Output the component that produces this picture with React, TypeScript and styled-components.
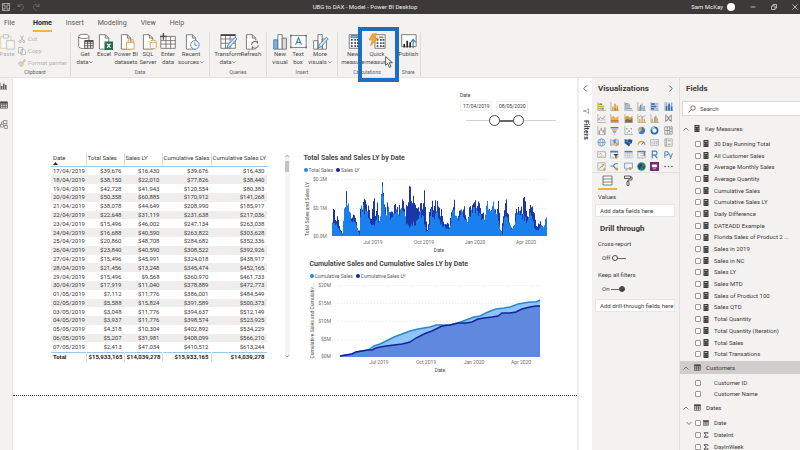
import React from "react";
import styled, { createGlobalStyle } from "styled-components";

const Global = createGlobalStyle`
  *, *::before, *::after { box-sizing: border-box; }
  body { margin: 0; background: #fff; }
  body, button, input { font-family: Roboto, "Open Sans", sans-serif; font-size: 6px; line-height: 8px; color: #3b3a39; }
  button { border: 0; padding: 0; background: none; cursor: pointer; }
  h2, h3, p, ul, fieldset { margin: 0; padding: 0; border: 0; list-style: none; }
  svg { display: block; flex: none; }
`;

const ORANGE = "#dfa03c";
const BLUE = "#4a80b8";
const GRAY = "#8c8a88";
const DARK = "#4a4846";

/* ---------- Shell ---------- */
const Shell = styled.div`
  display: flex;
  flex-direction: column;
  height: 100vh;
  overflow: hidden;
`;
const TitleBar = styled.header`
  display: grid;
  grid-template-columns: 1fr auto 1fr;
  align-items: center;
  height: 14px;
  flex: none;
  padding: 0 2px;
  background: #3b3a38;
  color: #f0efee;
`;
const TitleSide = styled.div<{ $end?: boolean }>`
  display: flex;
  align-items: center;
  justify-content: ${(p) => (p.$end ? "flex-end" : "flex-start")};
  gap: ${(p) => (p.$end ? 15 : 7)}px;
`;
const DocTitle = styled.div`
  padding-right: 70px;
`;
const User = styled.span`
  display: flex;
  align-items: center;
  gap: 4px;
  color: #f0efee;
`;
const Avatar = styled.span`
  width: 8px;
  height: 8px;
  border-radius: 50%;
  background: #fff;
`;
const Tabs = styled.nav`
  display: flex;
  align-items: stretch;
  gap: 14px;
  flex: none;
  height: 18px;
  padding-left: 4px;
  background: #f3f2f1;
`;
const Tab = styled.button<{ $active?: boolean }>`
  font-size: 7px;
  font-weight: ${(p) => (p.$active ? 700 : 400)};
  color: ${(p) => (p.$active ? "#252423" : "#5a5856")};
  border-bottom: 2px solid ${(p) => (p.$active ? "#eab93c" : "transparent")};
  padding-top: 1px;
  &:first-child { margin-right: 4px; }
`;

/* ---------- Ribbon ---------- */
const Ribbon = styled.div`
  display: flex;
  flex: none;
  height: 46px;
  background: #f3f2f1;
  border-bottom: 1px solid #e4e2e0;
`;
const Group = styled.section`
  display: flex;
  flex-direction: column;
  justify-content: space-between;
  align-items: center;
  margin-bottom: 1px;
  padding: 0 5px;
  border-right: 1px solid #dddbd9;
`;
const GroupRow = styled.div`
  display: flex;
`;
const GroupName = styled.div`
  font-size: 5px;
  line-height: 7px;
  color: #605e5c;
`;
const Command = styled.button<{ $w: number; $faded?: boolean }>`
  position: relative;
  display: flex;
  flex-direction: column;
  align-items: center;
  width: ${(p) => p.$w}px;
  padding-top: 1px;
  white-space: nowrap;
  opacity: ${(p) => (p.$faded ? 0.4 : 1)};
`;
const Line = styled.span`
  display: flex;
  align-items: center;
  gap: 1px;
  color: #4c4a48;
`;
const ClipGroup = styled(Group)`
  width: 71px;
  padding: 0;
`;
const ClipRow = styled.div`
  display: flex;
  align-self: stretch;
`;
const ClipList = styled.div`
  display: flex;
  flex-direction: column;
  gap: 4px;
  padding: 3px 0 0 4px;
`;
const ClipItem = styled.button`
  display: flex;
  align-items: center;
  gap: 2px;
  color: #b5b3b1;
  white-space: nowrap;
`;
const Highlight = styled.span`
  position: absolute;
  left: -5px;
  top: -5px;
  width: 41px;
  height: 55px;
  border: 4px solid #1b6fc1;
  z-index: 2;
`;
const Pointer = styled.span`
  position: absolute;
  left: 22px;
  top: 24px;
  z-index: 3;
`;

/* ---------- Body ---------- */
const Body = styled.div`
  display: flex;
  flex: 1;
  min-height: 0;
`;
const Rail = styled.nav`
  display: flex;
  flex-direction: column;
  align-items: flex-start;
  gap: 11px;
  width: 13px;
  flex: none;
  padding-top: 4px;
  background: #f3f2f1;
  border-right: 1px solid #e6e4e2;
`;
const Canvas = styled.main`
  flex: 1;
  min-width: 0;
  overflow: hidden;
`;
const Page = styled.div`
  display: flex;
  flex-direction: column;
  height: 318px;
  padding-top: 13px;
  border-bottom: 1px dotted #333;
`;
const Slicer = styled.fieldset`
  display: flex;
  flex-direction: column;
  align-self: flex-end;
  width: 97px;
  margin-right: 20px;
  font-size: 5px;
`;
const SlicerDates = styled.div`
  display: flex;
  gap: 4px;
  margin-top: 2px;
`;
const DateInput = styled.input`
  width: 32px;
  height: 10px;
  padding: 0 0 0 2px;
  border: 1px solid #f1f0ef;
  outline: 0;
  font-size: 5px;
`;
const Range = styled.div`
  display: grid;
  width: 90px;
  height: 13px;
  margin: 3px 0 0 6px;
  align-items: center;
  background:
    linear-gradient(#666, #666) 28px 6px / 24px 2px no-repeat,
    linear-gradient(#d4d2d0, #d4d2d0) 0 6px / 100% 1px no-repeat;
`;
const Thumb = styled.input`
  grid-area: 1 / 1;
  appearance: none;
  width: 100%;
  height: 11px;
  margin: 0;
  background: none;
  pointer-events: none;
  &::-webkit-slider-thumb {
    appearance: none;
    width: 11px;
    height: 11px;
    border: 1px solid #444;
    border-radius: 50%;
    background: #fff;
    pointer-events: auto;
  }
`;
const Visuals = styled.div`
  display: flex;
  align-items: flex-start;
  margin-top: 26px;
  padding-left: 38px;
`;
const SalesTable = styled.table`
  width: 216px;
  height: 209px;
  border-collapse: collapse;
  table-layout: fixed;
  tr > * { padding: 0 2px; text-align: right; font-weight: 400; white-space: nowrap; border-right: 1px solid transparent; }
  tr > *:first-child { text-align: left; }
  thead th { height: 13px; padding: 1px 1px 0; text-align: left; vertical-align: top; border-bottom: 1px solid #9cc7e6; border-right-color: #dedcda; }
  thead th:first-child { padding-left: 2px; }
  thead th:last-child, tfoot td:last-child { border-right-color: transparent; }
  tbody tr:nth-child(even) { background: #efeeed; }
  tfoot tr > * { height: 10px; font-weight: 700; color: #252423; border-top: 1px solid #9cc7e6; border-right-color: #dedcda; }
`;
const ScrollTrack = styled.div`
  display: flex;
  flex-direction: column;
  justify-content: space-between;
  align-items: center;
  width: 5px;
  height: 204px;
  margin: 1px 13px 0 17px;
  background: #f5f4f3;
`;
const ScrollThumb = styled.span`
  width: 4px;
  height: 11px;
  margin: 3px 0 auto;
  background: #c6c4c2;
`;
const Charts = styled.div`
  display: flex;
  flex-direction: column;
  gap: 3px;
`;
const Chart = styled.figure<{ $indent?: boolean }>`
  margin: 0 0 0 ${(p) => (p.$indent ? 7 : 1)}px;
  h3 { font-size: 7px; line-height: 10px; font-weight: 700; color: #4a4846; white-space: nowrap; }
  text { font-size: 5px; fill: #6f6d6b; }
  text.axis { fill: #4c4a48; }
`;
const Legend = styled.figcaption`
  display: flex;
  gap: 3px;
  margin: 3px 0 2px;
  color: #605e5c;
  font-size: 5px;
`;
const Key = styled.span<{ $c: string }>`
  display: flex;
  align-items: center;
  gap: 1px;
  &::before { content: ""; width: 4px; height: 4px; border-radius: 50%; background: ${(p) => p.$c}; }
`;

/* ---------- Panes ---------- */
const FiltersPane = styled.aside`
  display: flex;
  flex-direction: column;
  align-items: center;
  gap: 16px;
  width: 15px;
  flex: none;
  padding-top: 7px;
  border-left: 2px solid #eeedeb;
  background: #fff;
`;
const FiltersLabel = styled.h2`
  display: flex;
  align-items: center;
  gap: 6px;
  writing-mode: vertical-rl;
  font-size: 7px;
  font-weight: 700;
`;
const VizPane = styled.aside`
  display: flex;
  flex-direction: column;
  width: 88px;
  flex: none;
  background: #f3f2f1;
  border-right: 1px solid #e1dfdd;
`;
const PaneHead = styled.div`
  display: flex;
  align-items: center;
  justify-content: space-between;
  flex: none;
  height: 21px;
  padding: 0 5px 0 6px;
`;
const PaneTitle = styled.h2`
  font-size: 8px;
  font-weight: 700;
  line-height: 10px;
  color: #3b3a39;
`;
const VizGrid = styled.div`
  display: grid;
  grid-template-columns: repeat(6, 1fr);
  grid-auto-rows: 1fr;
  height: 71px;
  padding: 0 4px 0 3px;
  margin-top: 2px;
  place-items: center;
`;
const WellTabs = styled.div`
  display: flex;
  gap: 1px;
  padding-left: 6px;
  border-top: 1px solid #e1dfdd;
`;
const WellTab = styled.button<{ $active?: boolean }>`
  display: flex;
  justify-content: center;
  align-items: center;
  width: 19px;
  height: 17px;
  border-bottom: 2px solid ${(p) => (p.$active ? "#eab93c" : "transparent")};
`;
const Wells = styled.div`
  display: flex;
  flex-direction: column;
  padding: 3px 4px 0 3px;
`;
const WellLabel = styled.p<{ $top: number }>`
  margin: ${(p) => p.$top}px 0 3px 3px;
`;
const DropWell = styled.button`
  height: 13px;
  padding-left: 4px;
  background: #fff;
  border: 1px solid #e9e7e5;
  text-align: left;
  white-space: nowrap;
`;
const DrillTitle = styled(PaneTitle)`
  margin: 7px 0 3px 5px;
`;
const Toggle = styled.label`
  display: flex;
  align-items: center;
  gap: 2px;
  height: 10px;
  margin: 2px 0 0 7px;
  & + ${DropWell} { margin-top: 5px; }
`;
const Switch = styled.input`
  appearance: none;
  display: flex;
  align-items: center;
  width: 14px;
  height: 6px;
  margin: 0;
  background: linear-gradient(#666, #666) center / 100% 1px no-repeat;
  &::before { content: ""; width: 6px; height: 6px; border: 1px solid #4a4846; border-radius: 50%; background: #f3f2f1; }
  &:checked::before { margin-left: auto; background: #4a4846; }
`;
const FieldsPane = styled.aside`
  display: flex;
  flex-direction: column;
  width: 120px;
  flex: none;
  background: #f3f2f1;
  overflow: hidden;
`;
const Search = styled.label`
  display: flex;
  align-items: center;
  gap: 4px;
  flex: none;
  height: 15px;
  margin: 2px 0 6px 2px;
  padding-left: 5px;
  background: #fff;
  border: 1px solid #dddbd9;
  border-right: 0;
  input { flex: 1; min-width: 0; border: 0; padding: 0; outline: 0; background: none; }
  input::placeholder { color: #4c4a48; opacity: 1; }
`;
const TableHead = styled.button<{ $on?: boolean }>`
  display: flex;
  align-items: center;
  gap: 5px;
  flex: none;
  height: 13px;
  padding-left: 3px;
  background: ${(p) => (p.$on ? "#d0cecd" : "transparent")};
`;
const FieldList = styled.ul<{ $h: number }>`
  display: flex;
  flex-direction: column;
  flex: none;
  height: ${(p) => p.$h}px;
  margin: 3px 0 1px;
`;
const Field = styled.li`
  display: flex;
  align-items: center;
  flex: 1;
  padding-left: 6px;
  label { display: flex; align-items: center; white-space: nowrap; }
`;
const Expander = styled.span`
  display: flex;
  width: 9px;
`;
const Check = styled.input`
  appearance: none;
  width: 6px;
  height: 6px;
  margin: 0 2px 0 0;
  border: 1px solid #9a9896;
  border-radius: 1px;
  background: #fff;
`;
const FieldIcon = styled.span`
  display: flex;
  justify-content: center;
  width: 6px;
  margin-right: 5px;
`;

/* ---------- Small glyphs ---------- */
const Chevron = ({ d, s = 6, c = "#605e5c" }: { d: "l" | "r" | "u" | "d"; s?: number; c?: string }) => (
  <svg width={s} height={s} viewBox="0 0 12 12" fill="none" stroke={c} strokeWidth="1.6">
    <path d={{ l: "M8 1 3 6l5 5", r: "M4 1l5 5-5 5", u: "M1 9l5-5 5 5", d: "M1 4l5 5 5-5" }[d]} />
  </svg>
);
const Calc = () => (
  <svg width="6" height="7" viewBox="0 0 12 14">
    <rect x="1" y="0" width="10" height="14" rx="1" fill="#3b3a39" />
    <path d="M3 3h6M3 7h1M5.500 7h1M8 7h1M3 10.500h1M5.500 10.500h1M8 10.500h1" stroke="#e5e3e1" strokeWidth="1.400" />
  </svg>
);
const TableGlyph = ({ s = 7 }: { s?: number }) => (
  <svg width={s} height={s} viewBox="0 0 14 14" fill="none" stroke="#4a4846" strokeWidth="1.200">
    <rect x="1" y="1.500" width="12" height="11" />
    <path d="M1 3h12M1 6.500h12M1 9.500h12M5 3v9.500M9 3v9.500" />
    <path d="M1 3h12" strokeWidth="3" />
  </svg>
);
const Sigma = () => (
  <svg width="6" height="6" viewBox="0 0 12 12" fill="none" stroke="#3b3a39" strokeWidth="1.800">
    <path d="M10 3.500V1.500H2l4.500 4.500L2 10.500h8v-2" />
  </svg>
);

/* ---------- Ribbon icons (20 x 20 grid) ---------- */
const page = <path d="M4 2h7l4 4v13H4zM11 2v4h4" fill="#fff" stroke="#6b6967" />;
const cyl = (x: number, y: number, c: string) => (
  <g fill="#fff" stroke={c}>
    <path d={`M${x} ${y + 2}v7c0 2 7 2 7 0v-7`} />
    <ellipse cx={x + 3.5} cy={y + 2} rx="3.500" ry="1.500" />
  </g>
);
const bigCalc = (
  <g>
    <path d="M5 2h12v16H5z" fill="#fff" stroke="#6b6967" />
    <path d="M7 8h2m2 0h2m1 0h2M7 12h2m2 0h2m1 0h2M7 15.500h2m2 0h2m1 0h2" stroke="#4a4846" strokeWidth="2" />
  </g>
);
const ribbonIcons: Record<string, React.ReactNode> = {
  paste: <g fill="#fff"><path d="M2 4h12v14H2z" stroke="#d08a2a" /><path d="M5 2h6v4H5z" stroke="#6b6967" /><path d="M9 9h9v10H9z" stroke="#6b6967" /></g>,
  get: <g><path d="M2 4v12c0 3 12 3 12 0V4" fill="#fff" stroke="#6b6967" /><ellipse cx="8" cy="4" rx="6" ry="2.500" fill="#fff" stroke="#6b6967" /><path d="M9 9h10v9H9zM9 12h10M9 15h10M12.500 9v9M16 9v9" fill="#fff" stroke="#4a4846" /><path d="M9 9.500h10" stroke="#4a4846" strokeWidth="2" /></g>,
  excel: <g>{page}<rect x="10" y="10" width="10" height="10" fill="#1d7044" /><path d="M13 12.500l4 5M17 12.500l-4 5" stroke="#fff" strokeWidth="1.400" /></g>,
  pbi: <g>{page}<path d="M10 11h9v8h-9z" fill="#fff" stroke="#e09a3c" /><path d="M12 11V8h6v3" stroke="#e09a3c" fill="none" /></g>,
  sql: <g>{page}{cyl(12, 8, "#e09a3c")}</g>,
  enter: <g><path d="M1 4h17v14H1zM1 9h17M1 13h17M7 4v14M12.500 4v14" fill="#fff" stroke="#6b6967" /><path d="M4 0v8M0 4h8" stroke="#4a4846" strokeWidth="1.500" /></g>,
  recent: <g>{page}<circle cx="14" cy="14" r="5" fill="#fff" stroke="#3d7cc0" /><path d="M14 11v3.500h3" stroke="#3d7cc0" fill="none" /></g>,
  transform: <g><path d="M1 2h17v16H1zM1 7h17M1 12h17M6.500 2v16M12 2v16" fill="#fff" stroke="#6b6967" /><path d="M1 2.500h17" stroke="#4a4846" strokeWidth="2" /><path d="M8 18l2-5 8-8 2 2-8 9z" fill="#d5e6f7" stroke="#3d7cc0" /></g>,
  refresh: <g>{page}<circle cx="14" cy="14" r="5.500" fill="#f3f2f1" /><path d="M10 14a4 4 0 0 1 7-2.500V9M18 14a4 4 0 0 1-7 2.500V19" fill="none" stroke="#6b6967" strokeWidth="1.200" /></g>,
  visual: <g><path d="M2 8h5v11H2z" fill="#7fb0e0" stroke="#3d7cc0" /><path d="M7 2h5v17H7z" fill="#fff" stroke="#6b6967" /><path d="M12 6h5v13h-5z" fill="#dcdad8" stroke="#6b6967" /></g>,
  text: <g><path d="M1 3h18v14H1z" fill="#fff" stroke="#6b6967" /><path d="M6.500 14L10 5.500l3.500 8.500M8 11h4" fill="none" stroke="#3d7cc0" strokeWidth="1.300" /><path d="M0 2h2v2H0zM18 2h2v2h-2zM0 16h2v2H0zM18 16h2v2h-2z" fill="#3d7cc0" /></g>,
  more: <g><path d="M2 9h5v10H2zM7 2h5v17H7zM12 7h5v12h-5z" fill="#fff" stroke="#6b6967" /><path d="M7 18l2-5 8-8 2 2-8 9z" fill="#d5e6f7" stroke="#3d7cc0" /></g>,
  measure: <g>{bigCalc}<path d="M7 3h8v2.500H7z" fill="#7fb0e0" stroke="#3d7cc0" /></g>,
  quick: <g><g transform="translate(2 0)">{bigCalc}<path d="M10 5h5" stroke="#8c8a88" strokeWidth="2" /></g><path d="M4 1h5L7 6h4L2 15l2-7H0z" fill="#f0a83c" stroke="#e08c28" strokeWidth="0.800" /></g>,
  publish: <g><path d="M2 2h17v14H2z" fill="#fff" stroke="#6b6967" /><path d="M5 17v-4M8.500 17V9M12 17v-6" stroke="#252423" strokeWidth="2" /><path d="M15.500 18V8M12.500 11l3-3.500 3 3.500" stroke="#3d7cc0" strokeWidth="1.400" fill="none" /></g>,
};
const RIcon = ({ n }: { n: string }) => (
  <svg width="17" height="17" viewBox="0 0 20 20" strokeWidth="1">{ribbonIcons[n]}</svg>
);

type Cmd = { icon: string; lines: string[]; w: number; menu?: boolean };
const groups: { name: string; items: Cmd[] }[] = [
  { name: "Data", items: [
    { icon: "get", lines: ["Get", "data"], w: 18, menu: true },
    { icon: "excel", lines: ["Excel"], w: 20 },
    { icon: "pbi", lines: ["Power BI", "datasets"], w: 24 },
    { icon: "sql", lines: ["SQL", "Server"], w: 20 },
    { icon: "enter", lines: ["Enter", "data"], w: 20 },
    { icon: "recent", lines: ["Recent", "sources"], w: 26, menu: true } ] },
  { name: "Queries", items: [
    { icon: "transform", lines: ["Transform", "data"], w: 26, menu: true },
    { icon: "refresh", lines: ["Refresh"], w: 20 } ] },
  { name: "Insert", items: [
    { icon: "visual", lines: ["New", "visual"], w: 16 },
    { icon: "text", lines: ["Text", "box"], w: 20 },
    { icon: "more", lines: ["More", "visuals"], w: 24, menu: true } ] },
  { name: "Calculations", items: [
    { icon: "measure", lines: ["New", "measure"], w: 20 },
    { icon: "quick", lines: ["Quick", "measure"], w: 28 } ] },
  { name: "Share", items: [{ icon: "publish", lines: ["Publish"], w: 12 }] },
];

/* ---------- Visualization icons (16 x 16 grid) ---------- */
const st = (d: string, c: string, w = 1.3) => <path d={d} fill="none" stroke={c} strokeWidth={w} />;
const axes = st("M1.500 0v15H16", GRAY, 1);
const vizIcons: [string, React.ReactNode][] = [
  ["Stacked bar", <g>{axes}{st("M2 4h7M2 8h11M2 12h8", ORANGE, 2.6)}{st("M6 4h3M9 12h3", BLUE, 2.6)}</g>],
  ["Stacked column", <g>{axes}{st("M5 15V8M9 15V3M13 15V6", ORANGE, 2.8)}{st("M9 15v-4M13 15v-3", "#c97b2a", 2.8)}</g>],
  ["Clustered bar", <g>{axes}{st("M2 3h6M2 9h9", GRAY, 1.8)}{st("M2 5.500h9M2 12h12", BLUE, 1.6)}</g>],
  ["Clustered column", <g>{axes}{st("M4 15V8M9 15V3", GRAY, 1.6)}{st("M6.500 15V5M12.500 15V7", BLUE, 1.8)}</g>],
  ["100% stacked bar", <g>{axes}{st("M2 3.500h13M2 8h13M2 12h13", "#8db4dc", 2.8)}{st("M2 3.500h6M2 8h9M2 12h5", "#2c66a8", 2.8)}</g>],
  ["100% stacked column", <g>{axes}{st("M4.500 15V1M9 15V1M13.500 15V1", "#8db4dc", 2.8)}{st("M4.500 15V7M9 15V4M13.500 15V8", "#2c66a8", 2.8)}</g>],
  ["Line", <g>{axes}{st("M2 11l4-5 4 3 5-6", GRAY)}{st("M2 7l4 5 4-2 5 1", "#a8bfd6")}</g>],
  ["Area", <g><path d="M2 6l4-3 4 4 5-4v12H2z" fill="#e5b264" />{axes}{st("M2 12h13", "#c97b2a", 3)}</g>],
  ["Stacked area", <g><path d="M2 5l4-2 5 3 4-3v12H2z" fill={ORANGE} /><path d="M2 12l4-4 4 3 5-4v8H2z" fill="#756a5e" />{axes}</g>],
  ["Line and stacked column", <g>{axes}{st("M5 15V8M9 15V5M13 15V9", ORANGE, 2.2)}{st("M2 6l5-3 4 3 4-4", BLUE, 1)}</g>],
  ["Line and clustered column", <g>{axes}{st("M4 15V8M8 15V5M13 15V7", ORANGE, 2)}{st("M10.500 15V3", BLUE, 1.6)}</g>],
  ["Ribbon", <g>{st("M3 3c6 0 4 9 10 9M3 12c6 0 4-9 10-9", GRAY, 2)}{st("M3 1v13M13 1v13", GRAY, 1.6)}</g>],
  ["Waterfall", <g>{axes}{st("M4 14V8M7.500 9V3M11 7v5M14 15V2", GRAY, 2)}</g>],
  ["Funnel", <g>{st("M1 3h14", BLUE, 2.6)}{st("M3 7h10", ORANGE, 2.4)}{st("M5 10.500h6", BLUE, 2)}{st("M7 14h2", ORANGE, 2)}</g>],
  ["Scatter", <g>{axes}<g fill={GRAY}><circle cx="5" cy="5" r="1.300" /><circle cx="9" cy="9" r="1.500" /><circle cx="13" cy="5" r="1.300" /><circle cx="6" cy="12" r="1" /><circle cx="13" cy="12" r="1" /></g></g>],
  ["Pie", <g><circle cx="8" cy="8" r="6.500" fill="#a9cbe8" /><path d="M8 8V1.500A6.500 6.500 0 1 1 3 12.500z" fill="#3b78b5" /><path d="M8 8V1.500A6.500 6.500 0 0 0 2 6z" fill={ORANGE} /></g>],
  ["Donut", <g><circle cx="8" cy="8" r="5.500" fill="none" stroke="#2c66a8" strokeWidth="3" />{st("M3 6a5.500 5.500 0 0 1 5-3.500", "#a9cbe8", 3)}</g>],
  ["Treemap", <g>{st("M1.500 1.500h13v13h-13zM6 1.500v13M10 1.500v13M1.500 8H10M10 5h4.500M10 10h4.500", GRAY, 1.4)}</g>],
  ["Map", <g><circle cx="8" cy="8" r="6.500" fill="#e3eef7" stroke={BLUE} /><ellipse cx="8" cy="8" rx="3" ry="6.500" fill="none" stroke={BLUE} />{st("M1.500 8h13", BLUE, 1)}</g>],
  ["Filled map", <g><path d="M1 3l5 1 4-2 5 2v8l-4 2-4-2-6 1z" fill="#c9d9e8" stroke={GRAY} /><path d="M6 4l4-2v7l-3 1z" fill={BLUE} /><path d="M10 9l5-1v4l-4 2z" fill={ORANGE} /></g>],
  ["Shape map", <g><path d="M1 2l5 1 3-1 6 1-1 6-3 2-2 4-4-3-4-3z" fill="#24508c" /><path d="M6 3v4l4 1 1 3M2 6l4 1" fill="none" stroke="#8db4dc" /></g>],
  ["Gauge", <g>{st("M2 12a6 6 0 0 1 9-5", ORANGE, 2.4)}{st("M11 7a6 6 0 0 1 3 5", GRAY, 2.4)}{st("M8 12l3-4", DARK, 1.4)}</g>],
  ["Card", <g>{st("M1 3h14v10H1z", GRAY, 1)}{st("M4 6v4M6.500 6h2v4h-2M10.500 6h2v4h-2", GRAY, 1)}</g>],
  ["Multi-row card", <g>{st("M1.500 1.500h13v13h-13z", GRAY, 1)}{st("M4 1v14M7 5h5M7 11h5", GRAY, 1.6)}</g>],
  ["KPI", <g>{st("M1 3h14v10H1z", GRAY, 1)}{st("M4 8l2-2 2 2", BLUE, 1.2)}{st("M4 11h8", ORANGE, 1)}</g>],
  ["Slicer", <g>{st("M1 2h13v12H1z", GRAY, 1)}{st("M1 3h13", BLUE, 3)}<path d="M6 7h9l-3.500 4v4l-2-1v-3z" fill={DARK} /></g>],
  ["Table", <g>{st("M1.500 2h13v12h-13zM1.500 6h13M1.500 10h13M6 2v12M10 2v12", "#a9b4c0", 1)}{st("M1 3h14", BLUE, 2.4)}</g>],
  ["Matrix", <g>{st("M1.500 2h13v12h-13zM6 6h8M6 10h8", GRAY, 1)}{st("M1 3h14M13 3v7", BLUE, 2.2)}</g>],
  ["R script", <g>{st("M4 15V2h5a3.500 3.500 0 0 1 0 7H4M8.500 9l4.500 6", BLUE, 2)}</g>],
  ["Python", <g>{st("M1.500 14V3h3.500a2.800 2.800 0 0 1 0 6H2M9 6l3 7M15 6l-4 10", BLUE, 1.7)}</g>],
  ["Key influencers", <g>{st("M1.500 1.500h13v13h-13z", GRAY, 1)}{st("M4 12l4-5 3 2", BLUE, 1.2)}<circle cx="11" cy="5" r="2" fill={ORANGE} /><circle cx="13" cy="13" r="2" fill={ORANGE} /></g>],
  ["Decomposition tree", <g>{st("M1 7h5M6 7l3-4h5M6 7l3 4h5", BLUE, 2)}<circle cx="12" cy="13" r="2.500" fill={ORANGE} /></g>],
  ["Q&A", <g>{st("M1 2h14v9H7l-3 4v-4H1z", BLUE, 1.2)}<circle cx="11" cy="12" r="2.500" fill={ORANGE} /></g>],
  ["ArcGIS", <g><circle cx="8" cy="8" r="7.500" fill="#2f7f86" /><path d="M3 5l4-2 3 3-3 3-2 4-3-4zM10 9l4-1-2 5z" fill="#1d4b56" /></g>],
  ["Power Apps", <g><rect width="16" height="16" fill="#742774" /><path d="M4 5h8v4H4zM5 12h6" fill="#fff" stroke="#fff" /></g>],
  ["More visuals", <g fill={DARK}><circle cx="2" cy="8" r="1.300" /><circle cx="8" cy="8" r="1.300" /><circle cx="14" cy="8" r="1.300" /></g>],
];

/* ---------- Data ---------- */
const rows = `17/04/2019 39,676 16,430 39,676 16,430
18/04/2019 38,150 22,010 77,826 38,440
19/04/2019 42,728 41,943 120,554 80,383
20/04/2019 50,358 60,885 170,912 141,268
21/04/2019 38,078 44,649 208,990 185,917
22/04/2019 22,648 31,119 231,638 217,036
23/04/2019 15,496 46,002 247,134 263,038
24/04/2019 16,688 40,590 263,822 303,628
25/04/2019 20,860 48,708 284,682 352,336
26/04/2019 23,840 40,590 308,522 392,926
27/04/2019 15,496 45,991 324,018 438,917
28/04/2019 21,456 13,248 345,474 452,165
29/04/2019 15,496 9,568 360,970 461,733
30/04/2019 17,919 11,040 378,889 472,773
01/05/2019 7,112 11,776 386,001 484,549
02/05/2019 5,588 15,824 391,589 500,373
03/05/2019 3,048 11,776 394,637 512,149
04/05/2019 3,937 11,776 398,574 523,925
05/05/2019 4,318 10,304 402,892 534,229
06/05/2019 5,207 31,981 408,099 566,210
07/05/2019 2,413 47,034 410,512 613,244`.split("\n").map((l) => l.split(" "));

const measures = ["30 Day Running Total", "All Customer Sales", "Average Monthly Sales", "Average Quantity", "Cumulative Sales", "Cumulative Sales LY", "Daily Difference", "DATEADD Example", "Florida Sales of Product 2 ...", "Sales in 2019", "Sales in NC", "Sales LY", "Sales MTD", "Sales of Product 100", "Sales QTD", "Total Quantity", "Total Quantity (Iteration)", "Total Sales", "Total Transations"];

/* Key points as "x:value" pairs, in thirds of a chart unit above the baseline. */
const parse = (s: string) => s.split(" ").map((p) => p.split(":").map(Number));
const lyKeys = parse("0:48 5:94 8:51 16:54 23:21 30:11 36:36 40:116 43:121 46:96 50:94 54:51 62:48 66:86 70:41 76:26 80:4 84:71 88:86 92:96 97:134 102:96 107:98 111:66 118:61 126:111 130:71 135:91 140:36 145:71 149:140 153:138 157:98 162:81 168:93 174:71 180:76 188:81 194:84 200:76 206:86 212:121 218:71 224:96 230:138 235:121 241:134 246:111 251:76 258:86 264:106 269:96 275:128 280:76 284:8 290:56 296:104 304:108 310:91 316:91 322:76 326:86 330:51 336:36 344:34 350:31 358:66 364:120 368:61 376:41 380:71 386:101 391:96 398:71 406:51 412:96 418:88 425:151 429:91 435:111 441:104 448:86 456:46 461:91 468:84 476:76 482:86 490:71 499:94 503:26 508:8 514:91 519:108 525:91 530:36 538:26 546:26 550:76 556:84 562:71 568:86 576:116 581:71 587:46 595:101 602:81 608:48 616:31 623:36 628:46 633:28 638:48 646:50");
const tyKeys = parse("0:48 8:36 23:14 30:4 38:91 44:81 50:76 58:36 68:51 76:14 81:4 85:71 91:91 95:76 102:81 108:46 118:31 126:36 134:51 143:31 148:126 151:141 156:86 162:61 168:71 178:41 188:71 198:61 208:71 216:61 223:31 233:26 243:36 253:36 263:61 273:51 283:8 291:31 298:71 306:51 314:61 322:36 333:31 343:21 353:26 361:76 370:61 378:41 386:81 393:66 403:41 411:61 418:66 425:86 434:71 444:56 454:44 464:86 474:66 484:86 494:61 502:26 510:4 518:61 528:41 538:21 548:28 554:71 562:66 573:56 583:44 593:61 606:26 618:14 628:36 635:26 640:44 646:44");
const at = (k: number[][], x: number) => {
  const i = Math.max(1, k.findIndex((p) => p[0] >= x));
  const [a, b] = [k[i - 1], k[i]];
  return a[1] + ((b[1] - a[1]) * (x - a[0])) / (b[0] - a[0]);
};
const noise = (i: number, s: number) => {
  const v = Math.sin(i * 12.9898 + s * 78.233) * 43758.5453;
  return v - Math.floor(v);
};
const bars = (k: number[][], seed: number, spread: number, lift: number) =>
  Array.from({ length: 215 }, (_, i) => {
    const h = (at(k, i * 3) / 3) * lift * (1 + spread * (noise(i, seed) - 0.6));
    return `M${28 + i} ${60 - Math.max(1, h)}h1V60h-1z`;
  }).join("");
const lyBars = bars(lyKeys, 1, 0.5, 1);
const tyBars = bars(tyKeys, 2, 0.4, 1.1);

const cum = "30,74 36,73 42,72 46,70 52,69 58,68 64,64 70,62 76,59 84,55 92,52 100,49 108,47 114,46 120,45 126,43 132,43 140,43 148,41 156,38 164,35 170,34 178,30 186,27 194,26 200,25 208,22 214,21 220,20 226,20 230,18";
const cumLY = "30,74 36,73 42,72 46,70 52,69 58,68 62,68 66,66 70,65 76,64 84,63 92,62 100,60 106,56 114,52 122,49 132,44 140,43 148,41 156,41 162,40 168,37 174,36 182,35 188,34 192,31 200,31 206,30 212,27 220,25 226,24 230,24";

const FieldRow = ({ name, icon, expand }: { name: string; icon?: React.ReactNode; expand?: boolean }) => (
  <Field>
    <Expander>{expand && <Chevron d="d" />}</Expander>
    <label><Check type="checkbox" /><FieldIcon>{icon}</FieldIcon>{name}</label>
  </Field>
);

export default function App() {
  return (
    <Shell>
      <Global />
      <TitleBar>
        <TitleSide>
          <svg width="8" height="8" viewBox="0 0 16 16" fill="none" stroke="#c8c6c4" strokeWidth="1.500"><path d="M1 1h14v14H1zM4 1v5h8V1M4 15v-5h8v5" /></svg>
          <svg width="8" height="8" viewBox="0 0 16 16" fill="none" stroke="#7a7876" strokeWidth="1.500"><path d="M2 2v5h5M2 7c3-6 12-4 11 2 0 3-4 4-6 6" /></svg>
          <svg width="8" height="8" viewBox="0 0 16 16" fill="none" stroke="#7a7876" strokeWidth="1.500"><path d="M14 2v5H9M14 7C11 1 2 3 3 9c0 3 4 4 6 6" /></svg>
        </TitleSide>
        <DocTitle>UBG to DAX - Model - Power BI Desktop</DocTitle>
        <TitleSide $end>
          <User>Sam McKay<Avatar /></User>
          <svg width="6" height="6" viewBox="0 0 12 12" stroke="#e0dedc" strokeWidth="1.500"><path d="M1 6h10" /></svg>
          <svg width="6" height="6" viewBox="0 0 12 12" fill="none" stroke="#e0dedc" strokeWidth="1.500"><path d="M1 4h7v7H1zM4 4V1h7v7H8" /></svg>
          <svg width="6" height="6" viewBox="0 0 12 12" stroke="#e0dedc" strokeWidth="1.500"><path d="M1 1l10 10M11 1L1 11" /></svg>
        </TitleSide>
      </TitleBar>
      <Tabs>
        {["File", "Home", "Insert", "Modeling", "View", "Help"].map((t) => <Tab key={t} $active={t === "Home"}>{t}</Tab>)}
      </Tabs>
      <Ribbon>
        <ClipGroup>
          <ClipRow>
            <Command $w={14} $faded><RIcon n="paste" /><Line>Paste</Line></Command>
            <ClipList>
              <ClipItem><svg width="8" height="8" viewBox="0 0 16 16" fill="none" stroke="#a3a1a0" strokeWidth="1.400"><path d="M5 1l5 10M11 1L6 11" /><circle cx="4.500" cy="13" r="2" /><circle cx="11.500" cy="13" r="2" /></svg>Cut</ClipItem>
              <ClipItem><svg width="8" height="8" viewBox="0 0 16 16" fill="#fff" stroke="#a3a1a0" strokeWidth="1.400"><path d="M1 1h8v11H1zM6 5h6l3 3v7H6z" /></svg>Copy</ClipItem>
              <ClipItem><svg width="8" height="8" viewBox="0 0 16 16" fill="#ecd3a4" stroke="#b5b3b1" strokeWidth="1.200"><path d="M1 8l5-3 5 5-3 5-4-1zM8 7l5-6 2 2-5 6z" /></svg>Format painter</ClipItem>
            </ClipList>
          </ClipRow>
          <GroupName>Clipboard</GroupName>
        </ClipGroup>
        {groups.map((g) => (
          <Group key={g.name}>
            <GroupRow>
              {g.items.map((c) => (
                <Command key={c.icon} $w={c.w}>
                  <RIcon n={c.icon} />
                  {c.lines.map((l, i) => (
                    <Line key={l}>{l}{c.menu && i === 1 && <Chevron d="d" s={4} />}</Line>
                  ))}
                  {c.icon === "quick" && (
                    <>
                      <Highlight />
                      <Pointer><svg width="8" height="12" viewBox="0 0 12 18"><path d="M1 1v13l3-3 2.500 6 2.500-1-2.500-6H11z" fill="#fff" stroke="#333" strokeWidth="1.200" /></svg></Pointer>
                    </>
                  )}
                </Command>
              ))}
            </GroupRow>
            <GroupName>{g.name}</GroupName>
          </Group>
        ))}
      </Ribbon>
      <Body>
        <Rail>
          <button aria-label="Report"><svg width="8" height="8" viewBox="0 0 16 16" fill="#605e5c"><path d="M0 2h1v13H0zM0 14h14v1H0zM2 8h3v6H2zM6 3h3v11H6zM10 6h3v8h-3z" /></svg></button>
          <button aria-label="Data"><TableGlyph s={8} /></button>
          <button aria-label="Model"><svg width="8" height="9" viewBox="0 0 16 18" fill="none" stroke="#7a7876" strokeWidth="1.500"><path d="M7 1h7v6H7zM1 9h6v5H1zM9 11h6v6H9zM7 4H3v5M12 7v4" /></svg></button>
        </Rail>
        <Canvas>
          <Page>
            <Slicer>
              <span>Date</span>
              <SlicerDates>
                <DateInput aria-label="Start date" defaultValue="17/04/2019" />
                <DateInput aria-label="End date" defaultValue="08/05/2020" />
              </SlicerDates>
              <Range>
                <Thumb type="range" aria-label="Range start" defaultValue={29} />
                <Thumb type="range" aria-label="Range end" defaultValue={59} />
              </Range>
            </Slicer>
            <Visuals>
              <SalesTable>
                <colgroup><col width="35" /><col width="38" /><col width="38" /><col width="49" /><col width="56" /></colgroup>
                <thead><tr>
                  <th>Date<svg width="5" height="3" viewBox="0 0 10 6"><path d="M0 6l5-6 5 6z" fill="#252423" /></svg></th>
                  <th>Total Sales</th><th>Sales LY</th><th>Cumulative Sales</th><th>Cumulative Sales LY</th>
                </tr></thead>
                <tbody>{rows.map((r) => <tr key={r[0]}>{r.map((c, i) => <td key={i}>{i ? "$" : ""}{c}</td>)}</tr>)}</tbody>
                <tfoot><tr><td>Total</td><td>$15,933,165</td><td>$14,039,278</td><td>$15,933,165</td><td>$14,039,278</td></tr></tfoot>
              </SalesTable>
              <ScrollTrack><Chevron d="u" s={4} /><ScrollThumb /><Chevron d="d" s={4} /></ScrollTrack>
              <Charts>
                <Chart>
                  <h3>Total Sales and Sales LY by Date</h3>
                  <Legend><Key $c="#1a86f0">Total Sales</Key><Key $c="#12239e">Sales LY</Key></Legend>
                  <svg width="250" height="80" viewBox="0 0 250 80">
                    <path d="M28 3.500h215M28 32.500h215" stroke="#e6e4e2" strokeDasharray="1 2" />
                    <path d={lyBars} fill="#1a36a8" />
                    <path d={tyBars} fill="#1a80ee" />
                    <g textAnchor="end"><text x="23" y="5">$0.2M</text><text x="23" y="34">$0.1M</text><text x="23" y="62">$0.0M</text></g>
                    <g textAnchor="middle">
                      <text x="69" y="68">Jul 2019</text><text x="120" y="68">Oct 2019</text><text x="171" y="68">Jan 2020</text><text x="222" y="68">Apr 2020</text>
                      <text className="axis" x="135" y="76">Date</text>
                      <text className="axis" transform="translate(5 33) rotate(-90)">Total Sales and Sales LY</text>
                    </g>
                  </svg>
                </Chart>
                <Chart $indent>
                  <h3>Cumulative Sales and Cumulative Sales LY by Date</h3>
                  <Legend><Key $c="#2a86dc">Cumulative Sales</Key><Key $c="#12239e">Cumulative Sales LY</Key></Legend>
                  <svg width="245" height="92" viewBox="0 0 245 92">
                    <path d="M28 3.500h202M28 21.500h202M28 39.500h202M28 57.500h202" stroke="#e9e7e5" strokeDasharray="1 2" />
                    <polygon points={`30,75 ${cum} 230,75`} fill="#8ec5f8" />
                    <polygon points={`30,75 ${cumLY} 230,75`} fill="#5f89de" />
                    <polyline points={cum} fill="none" stroke="#2b86d0" strokeWidth="1.400" />
                    <polyline points={cumLY} fill="none" stroke="#12239e" strokeWidth="1.400" />
                    <g textAnchor="end"><text x="21" y="5">$20M</text><text x="21" y="23">$15M</text><text x="21" y="41">$10M</text><text x="21" y="59">$5M</text><text x="21" y="76">$0M</text></g>
                    <g textAnchor="middle">
                      <text x="69" y="82">Jul 2019</text><text x="116" y="82">Oct 2019</text><text x="164" y="82">Jan 2020</text><text x="211" y="82">Apr 2020</text>
                      <text className="axis" x="130" y="90">Date</text>
                      <text className="axis" transform="translate(4 39) rotate(-90)">Cumulative Sales and Cumulativ...</text>
                    </g>
                  </svg>
                </Chart>
              </Charts>
            </Visuals>
          </Page>
        </Canvas>
        <FiltersPane>
          <button aria-label="Expand filters"><Chevron d="l" s={7} /></button>
          <FiltersLabel>
            <svg width="6" height="6" viewBox="0 0 12 12" fill="none" stroke="#8a8886" strokeWidth="1.300"><path d="M11 1v10L6 7H1V5h5z" /></svg>
            Filters
          </FiltersLabel>
        </FiltersPane>
        <VizPane>
          <PaneHead><PaneTitle>Visualizations</PaneTitle><button aria-label="Collapse"><Chevron d="r" s={7} /></button></PaneHead>
          <VizGrid>
            {vizIcons.map(([n, g]) => (
              <button key={n} aria-label={n}><svg width="9" height="9" viewBox="0 0 16 16">{g}</svg></button>
            ))}
          </VizGrid>
          <WellTabs>
            <WellTab $active aria-label="Fields"><svg width="11" height="11" viewBox="0 0 22 22" fill="#fff" stroke="#605e5c" strokeWidth="1.600"><path d="M2 2h18v18H2zM2 8h18M2 14h18" /></svg></WellTab>
            <WellTab aria-label="Format"><svg width="10" height="11" viewBox="0 0 20 22" fill="none" stroke="#4a4846" strokeWidth="1.800"><path d="M3 2h12v5H3zM15 4h3v6h-8v3M8 13h4v8H8z" /></svg></WellTab>
          </WellTabs>
          <Wells>
            <WellLabel $top={0}>Values</WellLabel>
            <DropWell>Add data fields here</DropWell>
            <DrillTitle>Drill through</DrillTitle>
            <WellLabel $top={3}>Cross-report</WellLabel>
            <Toggle>Off<Switch type="checkbox" role="switch" /></Toggle>
            <WellLabel $top={8}>Keep all filters</WellLabel>
            <Toggle>On<Switch type="checkbox" role="switch" defaultChecked /></Toggle>
            <DropWell>Add drill-through fields here</DropWell>
          </Wells>
        </VizPane>
        <FieldsPane>
          <PaneHead><PaneTitle>Fields</PaneTitle></PaneHead>
          <Search>
            <svg width="8" height="8" viewBox="0 0 16 16" fill="none" stroke="#4a4846" strokeWidth="1.500"><circle cx="10" cy="6" r="4.500" /><path d="M7 9l-6 6" /></svg>
            <input placeholder="Search" aria-label="Search" />
          </Search>
          <TableHead><Chevron d="u" /><Calc />Key Measures</TableHead>
          <FieldList $h={222}>{measures.map((m) => <FieldRow key={m} name={m} icon={<Calc />} />)}</FieldList>
          <TableHead $on><Chevron d="u" /><TableGlyph />Customers</TableHead>
          <FieldList $h={23}><FieldRow name="Customer ID" /><FieldRow name="Customer Name" /></FieldList>
          <TableHead><Chevron d="u" /><TableGlyph />Dates</TableHead>
          <FieldList $h={36}>
            <FieldRow name="Date" expand icon={<TableGlyph s={6} />} />
            <FieldRow name="DateInt" icon={<Sigma />} />
            <FieldRow name="DayInWeek" icon={<Sigma />} />
          </FieldList>
        </FieldsPane>
      </Body>
    </Shell>
  );
}
